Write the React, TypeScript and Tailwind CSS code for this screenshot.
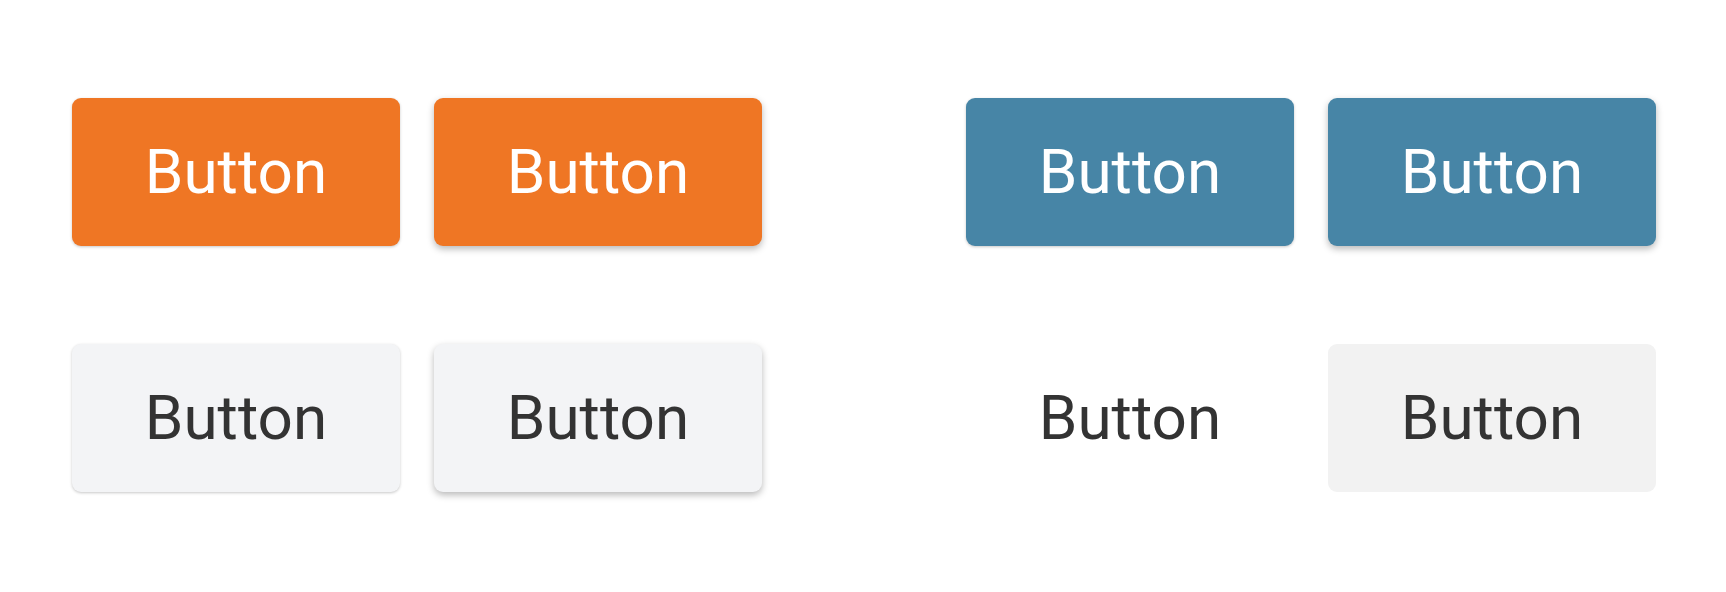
const base =
  "w-[328px] h-[148px] rounded-[9px] flex items-center justify-center text-[62px] leading-none font-['Roboto',sans-serif]";

const Btn: React.FC<{ className: string }> = ({ className }) => (
  <button className={`${base} ${className}`}>Button</button>
);

export default function App() {
  return (
    <div className="w-[1726px] h-[592px] bg-white pt-[98px] pl-[72px]">
      <div className="flex flex-col gap-[98px]">
        <div className="flex gap-[204px]">
          <div className="flex gap-[34px]">
            <Btn className="bg-[#ef7624] text-white shadow-[0_1px_3px_rgba(0,0,0,0.22)]" />
            <Btn className="bg-[#ef7624] text-white shadow-[0_3px_7px_rgba(0,0,0,0.28)]" />
          </div>
          <div className="flex gap-[34px]">
            <Btn className="bg-[#4785a6] text-white shadow-[0_1px_3px_rgba(0,0,0,0.22)]" />
            <Btn className="bg-[#4785a6] text-white shadow-[0_3px_7px_rgba(0,0,0,0.28)]" />
          </div>
        </div>
        <div className="flex gap-[204px]">
          <div className="flex gap-[34px]">
            <Btn className="bg-[#f3f4f6] text-[#333333] shadow-[0_1px_3px_rgba(0,0,0,0.22)]" />
            <Btn className="bg-[#f3f4f6] text-[#333333] shadow-[0_3px_7px_rgba(0,0,0,0.28)]" />
          </div>
          <div className="flex gap-[34px]">
            <Btn className="bg-transparent text-[#333333]" />
            <Btn className="bg-[#f2f2f2] text-[#333333]" />
          </div>
        </div>
      </div>
    </div>
  );
}
